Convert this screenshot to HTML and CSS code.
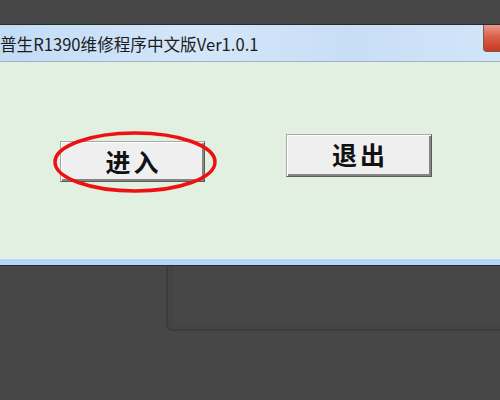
FILE: index.html
```html
<!DOCTYPE html>
<html lang="zh-CN">
<head>
    <meta charset="UTF-8">
    <title>普生R1390维修程序中文版Ver1.0.1</title>
    <link rel="stylesheet" href="styles.css">
</head>
<body class="page">
<div class="desk-top"></div>
<div class="win">
    <div class="win-title">
        <span class="win-caption">普生R1390维修程序中文版Ver1.0.1</span>
        <span class="win-close"></span>
    </div>
    <div class="win-body">
        <div class="btn-wrap btn-enter">
            <button class="btn3d">进入</button>
            <!-- 红圈标注 -->
            <svg class="mark" width="168" height="66" viewBox="0 0 168 66">
                <ellipse cx="84" cy="33" rx="80" ry="29" fill="none" stroke="#ee1111" stroke-width="3.5"/>
            </svg>
        </div>
        <div class="btn-wrap btn-exit">
            <button class="btn3d">退出</button>
        </div>
    </div>
    <div class="win-frame"></div>
</div>
<div class="desk-below">
    <div class="panel"></div>
</div>
</body>
</html>
```

FILE: styles.css
```css
html, body {
    margin: 0;
    padding: 0;
}

.page {
    background: #474747;
    width: 500px;
    height: 400px;
    overflow: hidden;
    font-family: "Noto Sans CJK SC", "Noto Sans", sans-serif;
}

.desk-top {
    height: 24px;
}

.win {
    border-top: 1px solid #2b2b2b;
}

.win-title {
    height: 36px;
    display: flex;
    align-items: flex-start;
    justify-content: space-between;
    background: linear-gradient(to right, #c2dcf6, #d4e6f9 40%, #c8def5 70%, #d2e5f9);
    border-bottom: 1px solid #a3b3c3;
}

.win-caption {
    font-size: 16.6px;
    line-height: 38px;
    color: #1c1c1c;
    white-space: nowrap;
}

.win-close {
    width: 16px;
    height: 26px;
    background: linear-gradient(to bottom, #e89a8c, #d9604a 45%, #c73a22);
    border-left: 1px solid #7a5a52;
    border-bottom: 1px solid #7a5a52;
    border-bottom-left-radius: 4px;
}

.win-body {
    height: 196px;
    background: #e1f0e1;
    display: flex;
    align-items: flex-start;
    border-bottom: 1px solid #e8f3ee;
}

.btn-wrap {
    position: relative;
}

.btn-enter {
    margin: 79px 0 0 60px;
}

.btn-exit {
    margin: 72px 0 0 81px;
}

.btn3d {
    display: block;
    width: 145px;
    height: 41px;
    padding: 0 0 0 2px;
    background: #efefef;
    border: 1px solid;
    border-color: #a8a8a8 #5c5c5c #5c5c5c #a8a8a8;
    box-shadow: inset 1px 1px #ffffff, inset -2px -2px #858585;
    font-family: "Noto Sans CJK SC", sans-serif;
    font-size: 25px;
    font-weight: bold;
    letter-spacing: 3px;
    color: #111;
    line-height: 1;
}

.btn-exit .btn3d {
    width: 146px;
    height: 43px;
    padding-bottom: 3px;
}

.mark {
    position: absolute;
    left: -9px;
    top: -12px;
}

.win-frame {
    height: 6px;
    background: #b7d5f8;
    border-bottom: 1px solid #2e2e2e;
}

.desk-below {
    padding-left: 166px;
}

.panel {
    height: 63px;
    background: #474747;
    border-left: 2px solid #3a3c3e;
    border-bottom: 2px solid #3a3c3e;
    border-bottom-left-radius: 6px;
    box-shadow: inset 6px -4px 0 #424446;
}
```
